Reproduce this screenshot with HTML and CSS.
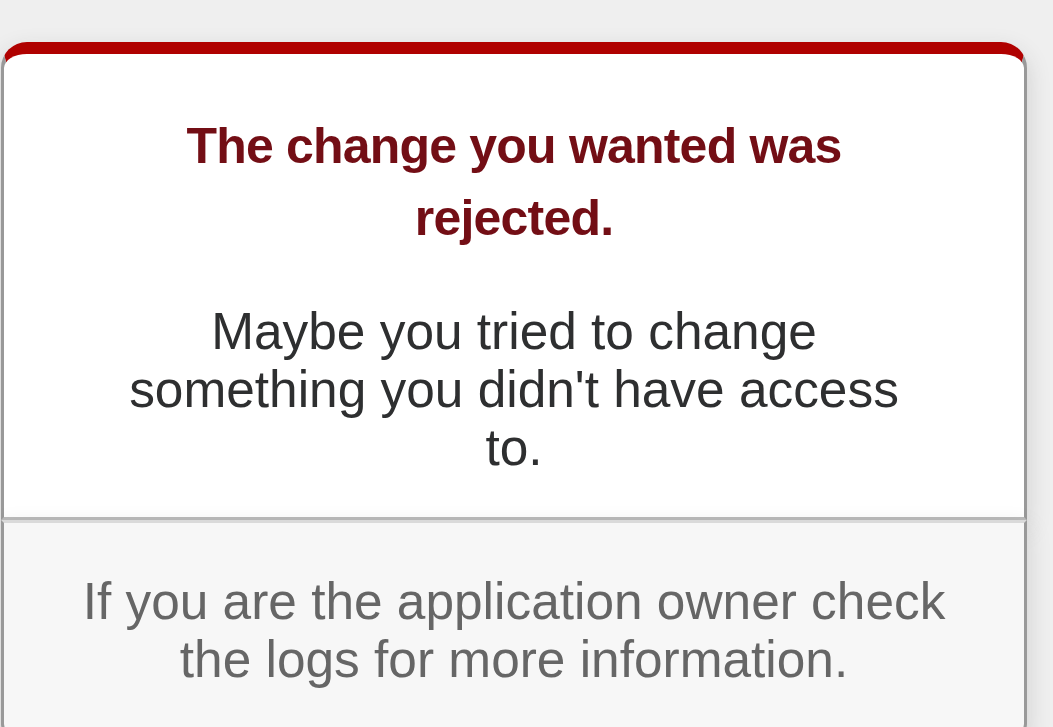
FILE: index.html
```html
<!DOCTYPE html>
<html lang="en">
<head>
<meta charset="utf-8">
<title>The change you wanted was rejected (422)</title>
<link rel="stylesheet" href="styles.css">
</head>
<body>
  <div class="dialog">
    <div class="dialog-main">
      <h1 class="dialog-title">The change you wanted was rejected.</h1>
      <p class="dialog-text">Maybe you tried to change something you didn't have access to.</p>
    </div>
    <p class="dialog-note">If you are the application owner check the logs for more information.</p>
  </div>
</body>
</html>
```

FILE: styles.css
```css
html, body {
  margin: 0;
  padding: 0;
}

body {
  background-color: #EFEFEF;
  color: #2E2F30;
  text-align: center;
  font-family: "Liberation Sans", Arial, sans-serif;
  overflow: hidden;
}

.dialog {
  width: 1026px;
  margin: 42px 0 0 1px;
}

.dialog-main {
  box-sizing: border-box;
  border: 3px solid #CCC;
  border-right-color: #999;
  border-left-color: #999;
  border-bottom-color: #BBB;
  border-top: 12px solid #B00100;
  border-top-left-radius: 26px;
  border-top-right-radius: 26px;
  background-color: #FFFFFF;
  padding: 20px 120px 0;
  box-shadow: 0 9px 23px rgba(50, 50, 50, 0.17);
}

.dialog-title {
  margin: 36px 0 0;
  font-size: 50px;
  font-weight: bold;
  letter-spacing: -0.8px;
  line-height: 72px;
  color: #730E15;
}

.dialog-text {
  margin: 48px 0 41px;
  font-size: 51.4px;
  line-height: 58px;
  color: #2E2F30;
}

.dialog-note {
  margin: 0 0 47px;
  padding: 49px 45px 45px;
  background-color: #F7F7F7;
  border: 3px solid #CCC;
  border-right-color: #999;
  border-left-color: #999;
  border-bottom-color: #999;
  border-top-color: #DADADA;
  border-bottom-left-radius: 12px;
  border-bottom-right-radius: 12px;
  color: #666666;
  font-size: 51.4px;
  line-height: 58px;
  box-shadow: 0 9px 23px rgba(50, 50, 50, 0.17);
}
```
